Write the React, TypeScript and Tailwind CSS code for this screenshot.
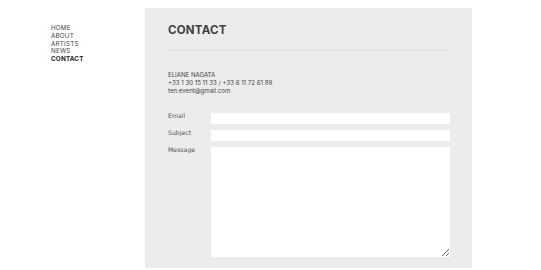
const navItems = ["HOME", "ABOUT", "ARTISTS", "NEWS", "CONTACT"];

// ─── Side navigation ─────────────────────────────────────────────────────────

function SideNav() {
    return (
        <nav className="w-[145px] shrink-0 pl-[51px] pt-[25px]">
            <ul className="font-['Inter',sans-serif] text-[6.3px] leading-[7.8px] tracking-[0.03em] text-[#444]">
                {navItems.map((item) => (
                    <li key={item} className={item === "CONTACT" ? "font-bold text-[#222]" : ""}>
                        {item}
                    </li>
                ))}
            </ul>
        </nav>
    );
}

// ─── Form row ────────────────────────────────────────────────────────────────

function Row({ label, children }: { label: string; children: React.ReactNode }) {
    return (
        <div className="flex items-start">
            <label className="w-[43px] shrink-0 -mt-[1px] font-['DejaVu_Sans',sans-serif] text-[6.2px] leading-[8px] text-[#555]">
                {label}
            </label>
            {children}
        </div>
    );
}

export default function App() {
    return (
        <div className="flex min-h-[270px] bg-white">
            <SideNav />
            <main className="w-[327px] mt-[8px] mb-[2px] bg-[#ececec] pl-[23px] pr-[22px] pt-[14px] pb-[11px]">
                <h1 className="font-['Inter',sans-serif] text-[11.5px] leading-[16px] font-bold tracking-[0.02em] text-[#3f3f3f]">
                    CONTACT
                </h1>
                <hr className="mt-[12px] border-0 h-px bg-[#dddddd]" />

                <div className="mt-[20px] font-['Inter',sans-serif] text-[6.1px] leading-[8px] text-[#444]">
                    <p>ELIANE NAGATA</p>
                    <p className="text-[#444]">+33 1 30 15 11 33 / +33 6 11 72 61 89</p>
                    <p>ten.event@gmail.com</p>
                </div>

                <form className="mt-[18px] flex flex-col gap-[6px]">
                    <Row label="Email">
                        <input type="text" className="h-[11px] flex-1 bg-white outline-none" />
                    </Row>
                    <Row label="Subject">
                        <input type="text" className="h-[11px] flex-1 bg-white outline-none" />
                    </Row>
                    <Row label="Message">
                        <textarea className="h-[110px] flex-1 bg-white outline-none" />
                    </Row>
                </form>
            </main>
        </div>
    );
}
